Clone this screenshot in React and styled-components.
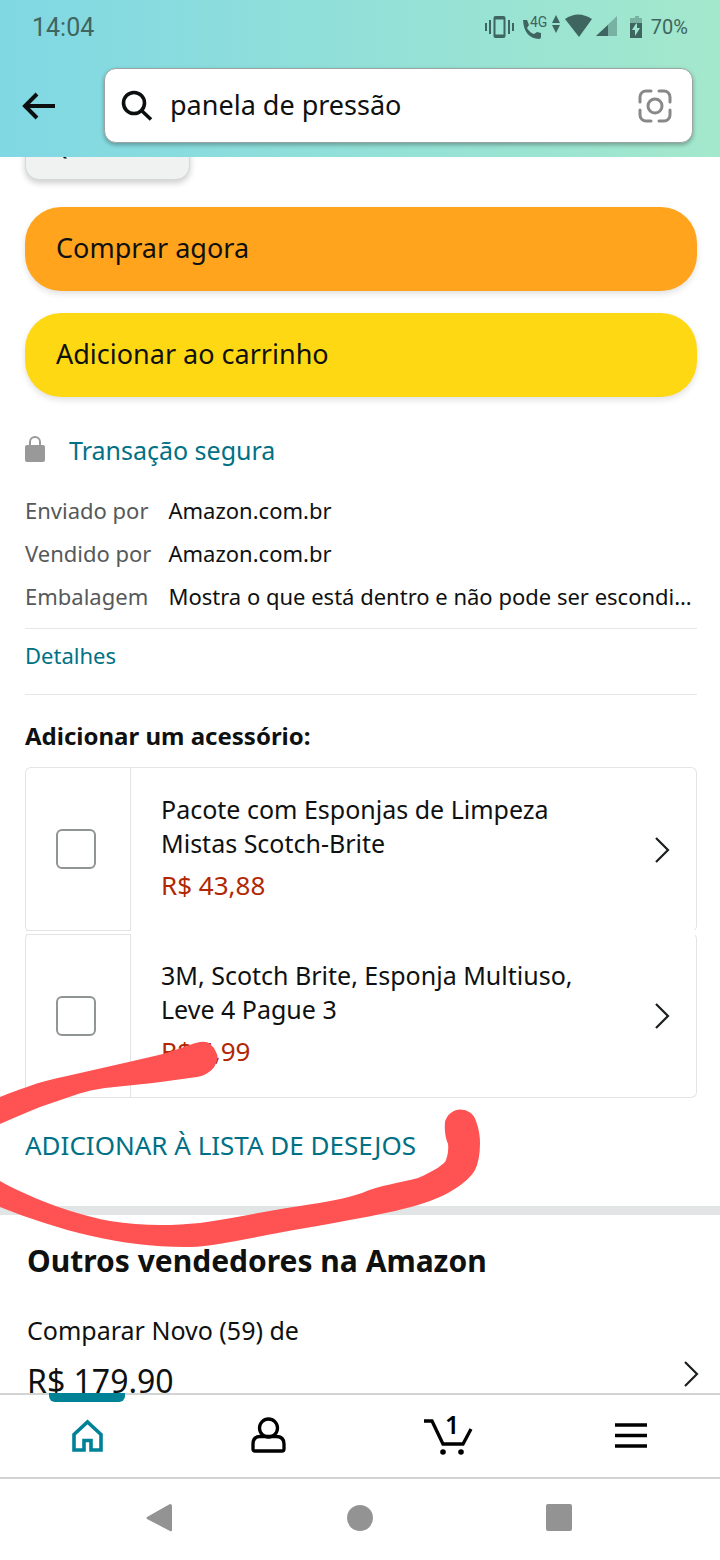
import React, { useState } from "react";
import styled, { createGlobalStyle } from "styled-components";

const GlobalStyle = createGlobalStyle`
  * {
    box-sizing: border-box;
  }

  body {
    margin: 0;
    background: #fff;
    color: #0f1111;
    font-family: "Noto Sans", "Open Sans", sans-serif;
  }

  button,
  input {
    font-family: inherit;
    color: inherit;
  }
`;

const accessories = [
  { id: "esponjas", title: "Pacote com Esponjas de Limpeza Mistas Scotch-Brite", price: "R$ 43,88" },
  { id: "multiuso", title: "3M, Scotch Brite, Esponja Multiuso, Leve 4 Pague 3", price: "R$ 5,99" },
];

const shipping = [
  { label: "Enviado por", value: "Amazon.com.br" },
  { label: "Vendido por", value: "Amazon.com.br" },
  { label: "Embalagem", value: "Mostra o que está dentro e não pode ser escondida" },
];

const StatusIcons = () => (
  <svg width="160" height="28" viewBox="0 0 160 28" fill="#3f6560" aria-hidden="true">
    <path d="M10.500 3h8a2 2 0 0 1 2 2v18a2 2 0 0 1-2 2h-8a2 2 0 0 1-2-2V5a2 2 0 0 1 2-2zm0 3.500v15h8v-15z" fillRule="evenodd" />
    <path d="M4 7h2v14H4zM0 10h2v8H0zM23 7h2v14h-2zM27 10h2v8h-2z" />
    <path d="M38 7h4l2 5-2 3q3 5 7 6l3-2 4 1v4q0 2-2 2Q39 25 38 7z" />
    <text x="45" y="14" fontSize="14" fontFamily="Roboto, sans-serif">4G</text>
    <path d="M71 2l4 8h-8zM71 20l4-8h-8z" />
    <path d="M80 6q13-9 27 0L94 24z" />
    <path d="M132 3v20h-21z" opacity="0.4" />
    <path d="M123 12v11h-12z" />
    <path d="M150 3h4v2h3v6h-12V5h5z" opacity="0.4" />
    <path d="M145 10h12v15h-12zM152 9l-5 8h3v6l5-8h-3z" fillRule="evenodd" />
  </svg>
);

const BackIcon = () => (
  <svg width="34" height="28" viewBox="0 0 34 28" fill="none" stroke="#0c0f0f" strokeWidth="4">
    <path d="M33 14H3M15 2L3 14l12 12" />
  </svg>
);

const SearchIcon = () => (
  <svg width="32" height="32" viewBox="0 0 32 32" fill="none" stroke="#0c0f0f" strokeWidth="3.600" aria-hidden="true">
    <circle cx="13" cy="13" r="10.500" />
    <path d="M20.500 20.500l9.500 9" />
  </svg>
);

const LensIcon = () => (
  <svg width="34" height="34" viewBox="0 0 34 34" fill="none" stroke="#888" strokeWidth="3" strokeLinecap="round">
    <path d="M13 2H8a6 6 0 0 0-6 6v5M21 2h5a6 6 0 0 1 6 6v5M2 21v5a6 6 0 0 0 6 6h5M32 21v5a6 6 0 0 1-6 6h-5" />
    <circle cx="17" cy="17" r="7" />
  </svg>
);

const LockIcon = () => (
  <svg width="20" height="28" viewBox="0 0 20 28" aria-hidden="true">
    <path d="M5 12V6a5 5 0 0 1 10 0v6" fill="none" stroke="#999" strokeWidth="2" />
    <rect y="9" width="20" height="17" rx="2" fill="#999" />
  </svg>
);

const Chevron = () => (
  <svg width="16" height="26" viewBox="0 0 16 26" fill="none" stroke="#1c1f1f" strokeWidth="2.200" aria-hidden="true">
    <path d="M1 1l12 12L1 25" />
  </svg>
);

const HomeIcon = () => (
  <svg width="40" height="40" viewBox="0 0 40 40" fill="none" stroke="#008296" strokeWidth="3.600">
    <path d="M4 34V18.500L17.500 6 31 18.500V34H21V24.500h-7V34z" />
  </svg>
);

const UserIcon = () => (
  <svg width="40" height="40" viewBox="0 0 40 40" fill="none" stroke="#000" strokeWidth="3.300">
    <circle cx="18.500" cy="12" r="9" />
    <path d="M10 20.500h16q8 0 8 7.500v5q0 2-2 2H5q-2 0-2-2v-5q0-7.500 7-7.500z" />
  </svg>
);

const CartIcon = () => (
  <svg width="52" height="44" viewBox="0 0 52 44" fill="none" stroke="#000" strokeWidth="3.300">
    <path d="M0 7h8l11 23h20l8-15" />
    <circle cx="19" cy="38" r="2.800" fill="#000" stroke="none" />
    <circle cx="37" cy="38" r="2.800" fill="#000" stroke="none" />
    <text x="21" y="20" fontSize="25" fontWeight="600" fill="#000" stroke="none">1</text>
  </svg>
);

const MenuIcon = () => (
  <svg width="34" height="28" viewBox="0 0 34 28" fill="none" stroke="#000" strokeWidth="3.300">
    <path d="M2 3h32M2 13.500h32M2 24h32" />
  </svg>
);

const Scribble = () => (
  <Marker viewBox="0 0 490 220" aria-hidden="true">
    <path d="M0 67C9 63 18 60 27 57C40 52 53 49 67 46L133 31L163 24L187 16Q194 13 200 12Q207 11 210 14Q214 17 216 22Q219 27 216 33Q214 39 209 42Q204 46 197 47L153 53L105 58Q90 60 78 64L40 77Q18 86 0 94z" />
    <path d="M0 151C25 165 67 183 110 191C140 196 170 196 200 193C230 189 265 181 300 176C325 172 345 169 362 163C380 155 400 153 418 148C434 141 445 134 446 130Q449 122 448 114Q444 105 445 92A16 16 0 0 1 476 91Q480 102 480 113Q480 130 475 140C469 151 450 164 430 171C400 182 350 190 283 202C245 209 215 216 190 217C125 218 60 201 0 177z" />
  </Marker>
);

export default function App() {
  const [query, setQuery] = useState("panela de pressão");

  return (
    <Screen>
      <GlobalStyle />
      <Header>
        <StatusBar>
          <Clock>14:04</Clock>
          <StatusIcons />
          <Battery>70%</Battery>
        </StatusBar>
        <SearchRow>
          <IconButton aria-label="Voltar">
            <BackIcon />
          </IconButton>
          <SearchBox>
            <SearchIcon />
            <SearchInput aria-label="Buscar" value={query} onChange={(e) => setQuery(e.target.value)} />
            <IconButton aria-label="Buscar com a câmera">
              <LensIcon />
            </IconButton>
          </SearchBox>
        </SearchRow>
      </Header>

      <Content>
        <BuyBox>
          <Quantity>Qtd: 1</Quantity>
          <BuyActions>
            <BuyButton $color="#ffa41c">Comprar agora</BuyButton>
            <BuyButton $color="#ffd814">Adicionar ao carrinho</BuyButton>
          </BuyActions>
          <Secure>
            <LockIcon />
            <Link href="#seguranca" $size="25px">
              Transação segura
            </Link>
          </Secure>
          <Shipping>
            {shipping.map((item) => (
              <React.Fragment key={item.label}>
                <dt>{item.label}</dt>
                <dd>{item.value}</dd>
              </React.Fragment>
            ))}
          </Shipping>
          <Details>
            <Link href="#detalhes" $size="22px">
              Detalhes
            </Link>
          </Details>
          <Subtitle>Adicionar um acessório:</Subtitle>
          <Accessories>
            {accessories.map((item) => (
              <Accessory key={item.id}>
                <CheckCell>
                  <Checkbox type="checkbox" id={item.id} />
                </CheckCell>
                <AccessoryText>
                  <label htmlFor={item.id}>{item.title}</label>
                  <Price>{item.price}</Price>
                </AccessoryText>
                <Chevron />
              </Accessory>
            ))}
          </Accessories>
        </BuyBox>

        <WishList>
          <Link href="#lista" $size="26px">
            ADICIONAR À LISTA DE DESEJOS
          </Link>
          <Scribble />
        </WishList>

        <Sellers>
          <Title>Outros vendedores na Amazon</Title>
          <Compare href="#vendedores">
            <CompareText>
              Comparar Novo (59) de
              <Amount>R$ 179.90</Amount>
            </CompareText>
            <Chevron />
          </Compare>
        </Sellers>
      </Content>

      <TabBar>
        <Tab $active aria-label="Início">
          <HomeIcon />
        </Tab>
        <Tab aria-label="Sua conta">
          <UserIcon />
        </Tab>
        <Tab aria-label="Carrinho">
          <CartIcon />
        </Tab>
        <Tab aria-label="Menu">
          <MenuIcon />
        </Tab>
      </TabBar>
      <SystemBar>
        <IconButton aria-label="Voltar">
          <svg width="28" height="28" viewBox="0 0 28 28" fill="#939393">
            <path d="M1 13L24 0q2 0 2 2v24q0 2-2 1L1 15q-1-1 0-2z" />
          </svg>
        </IconButton>
        <IconButton aria-label="Tela inicial">
          <svg width="26" height="26" viewBox="0 0 26 26" fill="#939393">
            <circle cx="13" cy="13" r="13" />
          </svg>
        </IconButton>
        <IconButton aria-label="Recentes">
          <svg width="28" height="28" viewBox="0 0 28 28" fill="#939393">
            <rect width="26" height="27" rx="2" />
          </svg>
        </IconButton>
      </SystemBar>
    </Screen>
  );
}

const Screen = styled.div`
  display: flex;
  flex-direction: column;
  height: 100vh;
`;

const Header = styled.header`
  flex: none;
  background: linear-gradient(to right, #80d8e4, #a4e8cc);
  padding-bottom: 14px;
`;

const StatusBar = styled.div`
  display: flex;
  align-items: center;
  height: 54px;
  padding: 0 32px;
  color: #3f6560;
  font-family: Roboto, sans-serif;
`;

const Clock = styled.span`
  margin-right: auto;
  font-size: 25px;
`;

const Battery = styled.span`
  margin-left: 6px;
  font-size: 20px;
`;

const SearchRow = styled.div`
  display: flex;
  align-items: center;
  gap: 48px;
  padding: 14px 27px 0 22px;
`;

const IconButton = styled.button`
  display: flex;
  flex: none;
  justify-content: center;
  padding: 0;
  border: 0;
  background: none;
  cursor: pointer;
`;

const SearchBox = styled.div`
  display: flex;
  flex: 1;
  align-items: center;
  gap: 17px;
  height: 75px;
  padding: 0 20px 0 16px;
  border: 1px solid #9aa5a3;
  border-radius: 12px;
  background: #fff;
  box-shadow: 0 2px 4px rgba(0, 0, 0, 0.3);
`;

const SearchInput = styled.input`
  flex: 1;
  min-width: 0;
  padding: 0 0 3px;
  border: 0;
  outline: none;
  background: none;
  font-size: 27px;
`;

const Content = styled.main`
  flex: 1;
  min-height: 0;
  overflow: hidden;
`;

const BuyBox = styled.section`
  display: flex;
  flex-direction: column;
  padding: 0 23px 0 25px;
`;

/* scrolled mostly under the header */
const Quantity = styled.button`
  width: 165px;
  height: 68px;
  margin-top: -45px;
  padding: 0 26px;
  border: 1px solid #d5d9d9;
  border-radius: 14px;
  background: #f0f1f1;
  box-shadow: 0 3px 6px rgba(0, 0, 0, 0.2);
  font-size: 22px;
  text-align: left;
`;

const BuyActions = styled.div`
  display: flex;
  flex-direction: column;
  gap: 22px;
  margin-top: 27px;
`;

const BuyButton = styled.button`
  height: 84px;
  padding: 0 31px 4px;
  border: 0;
  border-radius: 36px;
  background: ${(props) => props.$color};
  box-shadow: 0 3px 6px rgba(0, 0, 0, 0.12);
  font-size: 27px;
  text-align: left;
  cursor: pointer;
`;

const Link = styled.a`
  color: #007185;
  font-size: ${(props) => props.$size};
  text-decoration: none;
`;

const Secure = styled.div`
  display: flex;
  align-items: center;
  gap: 24px;
  height: 34px;
  margin: 36px 0 22px;
`;

const Shipping = styled.dl`
  display: grid;
  grid-template-columns: auto 1fr;
  column-gap: 17px;
  margin: 0;
  padding-bottom: 10px;
  border-bottom: 1px solid #e7e7e7;
  font-size: 22px;
  line-height: 43px;

  dt {
    color: #565959;
  }

  dd {
    min-width: 0;
    margin: 0;
    overflow: hidden;
    text-overflow: ellipsis;
    white-space: nowrap;
  }
`;

const Details = styled.div`
  height: 66px;
  padding-top: 11px;
  border-bottom: 1px solid #e7e7e7;
`;

const Subtitle = styled.h2`
  margin: 24px 0 14px;
  font-size: 24px;
  line-height: 34px;
`;

const Accessories = styled.ul`
  display: flex;
  flex-direction: column;
  gap: 1px;
  margin: 0;
  padding: 0;
  list-style: none;
`;

const Accessory = styled.li`
  display: flex;
  align-items: center;
  padding-right: 25px;
  border: 1px solid #e3e5e5;
  border-top-color: transparent;
  border-bottom-color: transparent;
  border-radius: 6px;

  &:first-child {
    border-top-color: #e3e5e5;
  }

  &:last-child {
    border-bottom-color: #e3e5e5;
  }
`;

const CheckCell = styled.div`
  display: flex;
  align-self: stretch;
  align-items: center;
  justify-content: center;
  width: 105px;
  border-right: 1px solid #e3e5e5;

  ${Accessory}:first-child & {
    border-bottom: 1px solid #e3e5e5;
  }

  ${Accessory}:last-child & {
    border-top: 1px solid #e3e5e5;
  }
`;

const Checkbox = styled.input`
  appearance: none;
  width: 40px;
  height: 40px;
  margin: 0 4px 0 0;
  border: 2px solid #8f9494;
  border-radius: 6px;
  background: #fff;

  &:checked {
    background: #007185;
  }
`;

const AccessoryText = styled.div`
  flex: 1;
  padding: 24px 60px 29px 30px;
  font-size: 25px;
  line-height: 34px;
`;

const Price = styled.div`
  margin-top: 8px;
  color: #b12704;
  font-size: 26px;
`;

const WishList = styled.section`
  position: relative;
  height: 117px;
  padding: 29px 25px 0;
  border-bottom: 9px solid #e2e5e5;
`;

const Marker = styled.svg`
  position: absolute;
  top: -68px;
  left: 0;
  width: 490px;
  height: 220px;
  fill: #ff5252;
  pointer-events: none;
`;

const Sellers = styled.section`
  padding: 24px 20px 0 27px;
`;

const Title = styled.h1`
  margin: 0;
  font-size: 30px;
  line-height: 44px;
`;

const Compare = styled.a`
  display: flex;
  align-items: center;
  justify-content: space-between;
  margin-top: 30px;
  color: inherit;
  font-size: 25px;
  line-height: 34px;
  text-decoration: none;
`;

const CompareText = styled.span`
  padding-bottom: 32px;
`;

const Amount = styled.span`
  display: block;
  margin-top: 12px;
  font-size: 32px;
  line-height: 44px;
`;

const TabBar = styled.nav`
  display: grid;
  flex: none;
  grid-template-columns: repeat(4, 1fr);
  height: 86px;
  border: solid #d2d4d4;
  border-width: 2px 0;
  background: #fff;
`;

const Tab = styled.button`
  position: relative;
  display: flex;
  align-items: center;
  justify-content: center;
  padding: 0;
  border: 0;
  background: none;
  cursor: pointer;

  &::before {
    content: "";
    display: ${(props) => (props.$active ? "block" : "none")};
    position: absolute;
    top: -2px;
    left: 49px;
    width: 76px;
    height: 9px;
    border-radius: 0 0 6px 6px;
    background: #008296;
  }
`;

const SystemBar = styled.div`
  display: grid;
  flex: none;
  grid-template-columns: repeat(3, 1fr);
  align-items: center;
  height: 81px;
  padding: 0 60px 3px;
`;
